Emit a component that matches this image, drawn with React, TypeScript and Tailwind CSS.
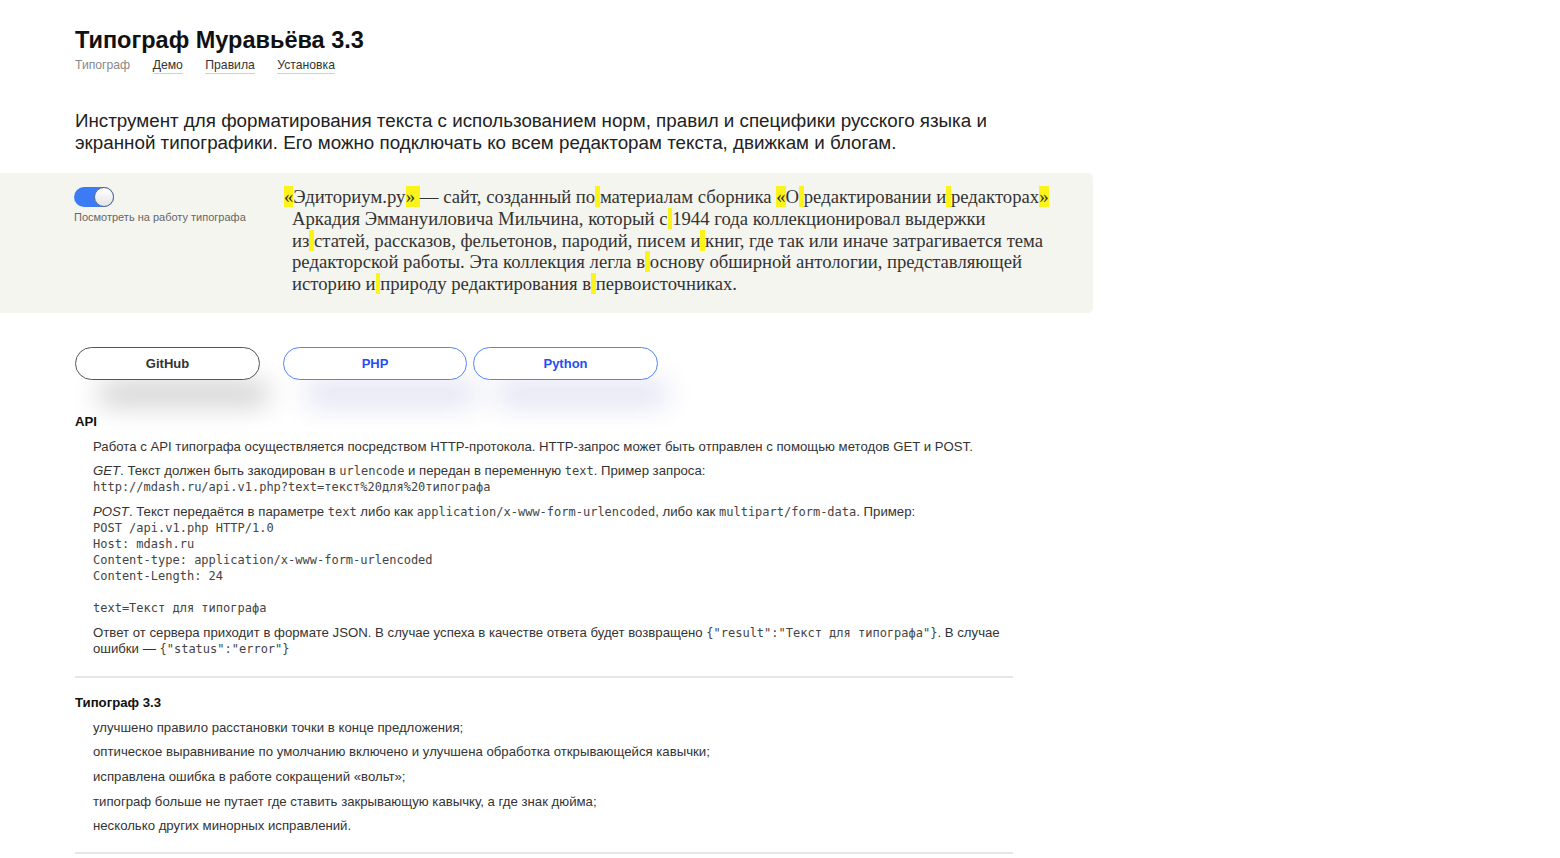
import React from "react";

const HL = ({ children }: { children: React.ReactNode }) => (
  <span className="bg-[#fbf31a]">{children}</span>
);
const SP = () => <span className="bg-[#fbf31a]">{"\u00a0"}</span>;

const Mono = ({ children }: { children: React.ReactNode }) => (
  <code className="font-['DejaVu_Sans_Mono',monospace] text-[12px] text-[#444]">{children}</code>
);

export default function App() {
  return (
    <div className="min-h-[858px] bg-white font-['Liberation_Sans',Arial,sans-serif] text-[#222]">
      <div className="w-[1093px]">
        <div className="px-[75px] pt-[26px]">
          <h1 className="text-[23.5px] font-bold leading-[28px] text-[#111]">Типограф Муравьёва 3.3</h1>
          <nav className="mt-[3px] flex gap-[22.5px] text-[12.2px] leading-[16px]">
            <span className="text-[#888]">Типограф</span>
            <a className="border-b border-[#d0d0d0] text-[#333]">Демо</a>
            <a className="border-b border-[#d0d0d0] text-[#333]">Правила</a>
            <a className="border-b border-[#d0d0d0] text-[#333]">Установка</a>
          </nav>
          <p className="mt-[36px] w-[960px] whitespace-nowrap text-[18.8px] leading-[22px] text-[#222]">
            Инструмент для форматирования текста с использованием норм, правил и специфики русского языка и
            <br />
            экранной типографики. Его можно подключать ко всем редакторам текста, движкам и блогам.
          </p>
        </div>

        <div className="mt-[19px] flex rounded-r-[5px] bg-[#f5f5f0] pb-[18px] pl-[74px] pt-[13px]">
          <div className="w-[218px] shrink-0">
            <div className="relative mt-[1px] h-[20px] w-[40px] rounded-full bg-[#3b7bf6]">
              <div className="absolute right-0 top-0 h-[20px] w-[20px] rounded-full border border-[#5c6b8a] bg-gradient-to-b from-white to-[#e4e4e4]" />
            </div>
            <div className="mt-[3px] text-[11px] leading-[14px] text-[#666]">Посмотреть на работу типографа</div>
          </div>
          <p className="whitespace-nowrap font-['Liberation_Serif','DejaVu_Serif',serif] text-[18.7px] leading-[21.75px] text-[#333]">
            <span className="ml-[-8px]"><HL>«</HL></span>Эдиториум.ру<HL>»{"\u00a0"}</HL>— сайт, созданный по<SP />материалам сборника <HL>«</HL>О<SP />редактировании и<SP />редакторах<HL>»</HL>
            <br />
            Аркадия Эммануиловича Мильчина, который с<SP />1944 года коллекционировал выдержки
            <br />
            из<SP />статей, рассказов, фельетонов, пародий, писем и<SP />книг, где так или иначе затрагивается тема
            <br />
            редакторской работы. Эта коллекция легла в<SP />основу обширной антологии, представляющей
            <br />
            историю и<SP />природу редактирования в<SP />первоисточниках.
          </p>
        </div>

        <div className="px-[75px]">
          <div className="mt-[34px] flex">
            <button className="h-[33px] w-[185px] rounded-full border border-[#555] bg-white text-[13px] font-bold text-[#333] shadow-[16px_30px_28px_-6px_rgba(0,0,0,0.22)]">
              GitHub
            </button>
            <button className="ml-[23px] h-[33px] w-[184px] rounded-full border border-[#5583f4] bg-white text-[13px] font-bold text-[#1f4ff3] shadow-[16px_30px_28px_-6px_rgba(50,60,170,0.18)]">
              PHP
            </button>
            <button className="ml-[6px] h-[33px] w-[185px] rounded-full border border-[#5583f4] bg-white text-[13px] font-bold text-[#1f4ff3] shadow-[16px_30px_28px_-6px_rgba(50,60,170,0.18)]">
              Python
            </button>
          </div>

          <h2 className="mt-[34px] text-[13.2px] font-bold leading-[16px] text-[#111]">API</h2>
          <div className="pl-[18px] text-[13.2px] leading-[16px] text-[#333]">
            <p className="mt-[9px]">
              Работа с API типографа осуществляется посредством HTTP-протокола. HTTP-запрос может быть отправлен с помощью методов GET и POST.
            </p>
            <p className="mt-[8px]">
              <i>GET</i>. Текст должен быть закодирован в <Mono>urlencode</Mono> и передан в переменную <Mono>text</Mono>. Пример запроса:
              <br />
              <Mono>http://mdash.ru/api.v1.php?text=текст%20для%20типографа</Mono>
            </p>
            <p className="mt-[9px]">
              <i>POST</i>. Текст передаётся в параметре <Mono>text</Mono> либо как <Mono>application/x-www-form-urlencoded</Mono>, либо как <Mono>multipart/form-data</Mono>. Пример:
            </p>
            <pre className="font-['DejaVu_Sans_Mono',monospace] text-[12px] leading-[16px] text-[#444]">
{`POST /api.v1.php HTTP/1.0
Host: mdash.ru
Content-type: application/x-www-form-urlencoded
Content-Length: 24

text=Текст для типографа`}
            </pre>
            <p className="mt-[9px] whitespace-nowrap">
              Ответ от сервера приходит в формате JSON. В случае успеха в качестве ответа будет возвращено <Mono>{'{"result":"Текст для типографа"}'}</Mono>. В случае
              <br />
              ошибки — <Mono>{'{"status":"error"}'}</Mono>
            </p>
          </div>
          <div className="mt-[19px] h-[2px] w-[938px] bg-[#e6e6e6]" />

          <h2 className="mt-[17px] text-[13.2px] font-bold leading-[16px] text-[#111]">Типограф 3.3</h2>
          <ul className="mt-[9px] flex flex-col gap-[8.6px] pl-[18px] text-[13.2px] leading-[16px] text-[#333]">
            <li>улучшено правило расстановки точки в конце предложения;</li>
            <li>оптическое выравнивание по умолчанию включено и улучшена обработка открывающейся кавычки;</li>
            <li>исправлена ошибка в работе сокращений «вольт»;</li>
            <li>типограф больше не путает где ставить закрывающую кавычку, а где знак дюйма;</li>
            <li>несколько других минорных исправлений.</li>
          </ul>
          <div className="mt-[18px] h-[2px] w-[938px] bg-[#e6e6e6]" />
        </div>
      </div>
    </div>
  );
}
